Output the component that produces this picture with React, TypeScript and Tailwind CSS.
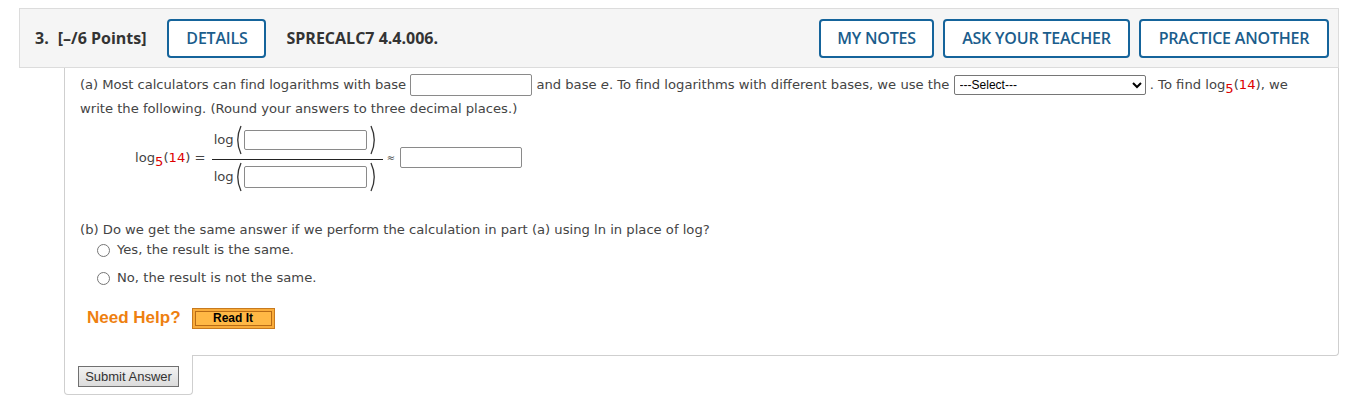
import React from 'react';

const Paren = ({ right = false }: { right?: boolean }) => (
  <svg width="9" height="30" viewBox="0 0 9 30" className="shrink-0">
    <path
      d={right ? 'M2 1 Q8.5 15 2 29' : 'M7 1 Q0.5 15 7 29'}
      fill="none"
      stroke="#333"
      strokeWidth="1.3"
    />
  </svg>
);

const Box = ({ w, h = 21 }: { w: number; h?: number }) => (
  <span
    className="inline-block bg-white border border-[#8a8a8a] rounded-[2px] align-middle"
    style={{ width: w, height: h }}
  />
);

const Log5 = () => (
  <>
    log<span className="relative top-[4px] text-[#d00]">5</span>(<span className="text-[#d00]">14</span>)
  </>
);

const HeadButton = ({ label, w }: { label: string; w: number }) => (
  <button
    className="h-[39px] border-2 border-[#15649b] rounded-[4px] bg-white text-[#1b5d8c] text-[16px] font-semibold tracking-[-0.2px] flex items-center justify-center"
    style={{ width: w }}
  >
    {label}
  </button>
);

const Radio = ({ label, className = '' }: { label: string; className?: string }) => (
  <div className={`flex items-center h-[20px] pl-[17px] ${className}`}>
    <span className="w-[13px] h-[13px] rounded-full border border-[#767676] bg-white mr-[7px]" />
    <span>{label}</span>
  </div>
);

export default function App() {
  return (
    <div className="w-[1349px] h-[402px] bg-white pt-[8px] pl-[19px] pr-[10px] overflow-hidden">
      {/* question header */}
      <div className="h-[60px] bg-[#f5f5f5] border border-[#dcdcdc] flex items-center pl-[15px] pr-[9px] font-['Open_Sans',sans-serif] text-[#333]">
        <span className="text-[16px] font-bold mr-[9px]">3.</span>
        <span className="text-[16px] font-bold mr-[21px]">[–/6 Points]</span>
        <HeadButton label="DETAILS" w={99} />
        <span className="text-[16px] font-bold ml-[20px]">SPRECALC7 4.4.006.</span>
        <div className="ml-auto flex gap-[9px]">
          <HeadButton label="MY NOTES" w={115} />
          <HeadButton label="ASK YOUR TEACHER" w={187} />
          <HeadButton label="PRACTICE ANOTHER" w={190} />
        </div>
      </div>

      {/* question body */}
      <div className="ml-[45px] font-['DejaVu_Sans',sans-serif] text-[13.15px] text-[#444]">
        <div className="border-l border-r border-b border-[#cfcfcf] rounded-br-[4px] pl-[15px] pr-[20px] pt-[5px] pb-[27px]">
          <div className="leading-[24px]">
            <div className="flex items-center h-[24px] whitespace-nowrap">
              <span className="tracking-[-0.05px]">(a) Most calculators can find logarithms with base&nbsp;</span>
              <Box w={122} h={22} />
              <span>&nbsp;and base <i>e</i>. To find logarithms with different bases, we use the&nbsp;</span>
              <select className="w-[192px] h-[20px] border border-[#767676] rounded-[2px] bg-white text-[12px] text-black font-['Liberation_Sans',sans-serif] px-[1px]">
                <option>---Select---</option>
              </select>
              <span>&nbsp;. To find <Log5 />, we</span>
            </div>
            <div>write the following. (Round your answers to three decimal places.)</div>
          </div>

          {/* fraction */}
          <div className="flex items-center ml-[55px]">
            <span className="whitespace-nowrap"><Log5 /> =</span>
            <div className="ml-[6px] flex flex-col w-[171px]">
              <div className="flex items-center h-[38px] pl-[2px]">
                <span>log</span>
                <Paren />
                <span className="ml-[1px]"><Box w={123} h={20} /></span>
                <span className="ml-[2px]"><Paren right /></span>
              </div>
              <div className="h-[1px] bg-[#222]" />
              <div className="flex items-center h-[34px] pl-[2px]">
                <span>log</span>
                <Paren />
                <span className="ml-[1px]"><Box w={123} h={22} /></span>
                <span className="ml-[2px]"><Paren right /></span>
              </div>
            </div>
            <span className="ml-[4px] mr-[5px] text-[10px]">≈</span>
            <Box w={122} h={21} />
          </div>

          <div className="mt-[26px] h-[20px] flex items-center">
            (b) Do we get the same answer if we perform the calculation in part (a) using ln in place of log?
          </div>
          <Radio label="Yes, the result is the same." />
          <Radio label="No, the result is not the same." className="mt-[8px]" />

          <div className="flex items-center mt-[20px] ml-[7px] h-[20px]">
            <span className="font-['Liberation_Sans',sans-serif] font-bold text-[17px] text-[#ee8010]">Need Help?</span>
            <button className="ml-[11px] w-[83px] h-[21px] border border-[#c87a1e] bg-[#f9ac3a] p-[2px] flex">
              <span className="flex-1 border border-[#b86b16] bg-[#ffb845] text-[12px] font-bold text-black font-['Liberation_Sans',sans-serif] flex items-center justify-center leading-none">
                Read It
              </span>
            </button>
          </div>
        </div>

        {/* submit tab */}
        <div className="-mt-px w-[129px] h-[40px] bg-white border-l border-r border-b border-[#cfcfcf] rounded-b-[4px] pl-[13px] pt-[11px]">
          <button className="w-[101px] h-[21px] border border-[#707070] bg-gradient-to-b from-[#f2f2f2] to-[#dcdcdc] text-[13px] text-[#333] font-['Liberation_Sans',sans-serif] leading-none">
            Submit Answer
          </button>
        </div>
      </div>
    </div>
  );
}
